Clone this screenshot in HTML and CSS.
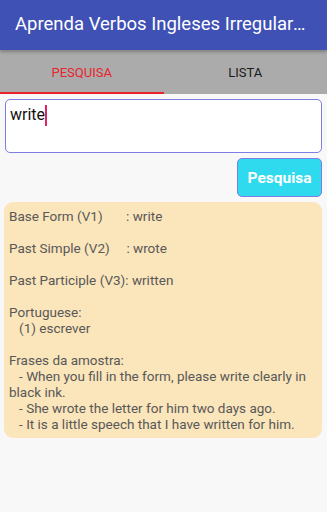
FILE: index.html
```html
<!DOCTYPE html>
<html lang="pt">
<head>
	<meta charset="UTF-8">
	<title>Aprenda Verbos Ingleses Irregulares</title>
	<link rel="stylesheet" href="styles.css">
</head>
<body>
	<div class="app-bar">
		<div class="app-title">Aprenda Verbos Ingleses Irregulares</div>
	</div>
	<div class="tabs">
		<div class="tab on">PESQUISA</div>
		<div class="tab">LISTA</div>
	</div>
	<div class="content">
		<div class="search-box">
			<span class="search-text">write</span><span class="caret"></span>
		</div>
		<div class="btn-row">
			<div class="btn-search">Pesquisa</div>
		</div>
		<div class="result">Base Form (V1)       : write

Past Simple (V2)     : wrote

Past Participle (V3): written

Portuguese:
   (1) escrever

Frases da amostra:
   - When you fill in the form, please write clearly in black ink.
   - She wrote the letter for him two days ago.
   - It is a little speech that I have written for him.</div>
	</div>
</body>
</html>
```

FILE: styles.css
```css
*{
	margin: 0;
	padding: 0;
	box-sizing: border-box;
}
body{
	width: 327px;
	height: 512px;
	background-color: #f8f8f9;
	font-family: Roboto, "Liberation Sans", sans-serif;
	overflow: hidden;
}
.app-bar{
	height: 50px;
	background-color: #3f51b5;
	padding: 0 16px 0 15px;
	display: flex;
	align-items: center;
	position: relative;
	z-index: 1;
	box-shadow: 0 2px 3px rgba(0,0,0,0.25);
}
.app-title{
	color: #fff;
	font-size: 18.5px;
	white-space: nowrap;
	overflow: hidden;
	text-overflow: ellipsis;
	padding-bottom: 2px;
}
.tabs{
	height: 44px;
	background-color: #ababab;
	display: flex;
}
.tab{
	flex: 1;
	display: flex;
	align-items: center;
	justify-content: center;
	font-size: 13px;
	color: #1a1a1a;
	border-bottom: 2px solid transparent;
	padding-top: 2px;
}
.tab.on{
	color: #e8232b;
	border-bottom-color: #e8232b;
}
.content{
	padding: 5px 5px 0 5px;
}
.search-box{
	height: 54px;
	background-color: #fff;
	border: 1.5px solid #7d7de3;
	border-radius: 5px;
	padding: 4px 0 0 4px;
	display: flex;
	align-items: flex-start;
}
.search-text{
	font-size: 16px;
	color: #111;
	line-height: 22px;
}
.caret{
	width: 1.5px;
	height: 21px;
	margin-top: 1px;
	background-color: #e0245e;
}
.btn-row{
	display: flex;
	justify-content: flex-end;
	padding-top: 5px;
}
.btn-search{
	width: 85px;
	height: 39px;
	background-color: #2fd9ee;
	border: 1.5px solid #7d7de3;
	border-radius: 5px;
	color: #fff;
	font-size: 15.5px;
	font-weight: bold;
	display: flex;
	align-items: center;
	justify-content: center;
}
.result{
	margin-top: 5px;
	margin-left: -1px;
	background-color: #fbe5bb;
	border-radius: 9px;
	padding: 6px 6px 6px 5px;
	color: #585858;
	font-size: 13.5px;
	line-height: 16px;
	white-space: pre-wrap;
	min-height: 235px;
}
```
